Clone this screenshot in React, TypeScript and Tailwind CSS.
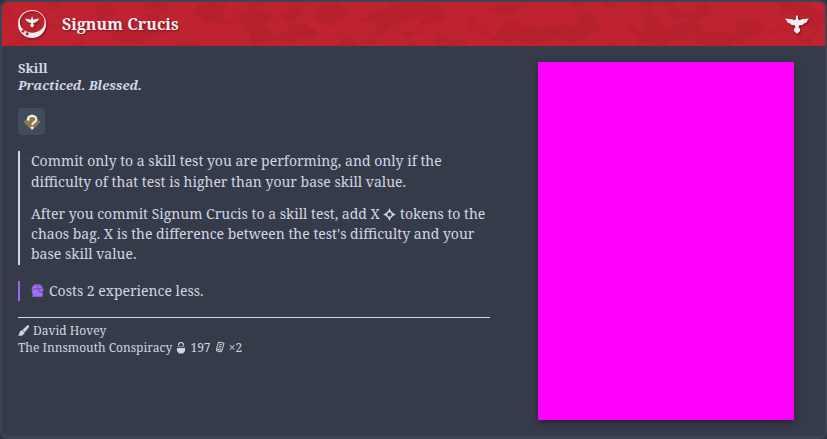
import React from "react";

function Texture() {
  return (
    <svg className="absolute inset-0 h-full w-full" aria-hidden="true">
      <filter id="grain" x="0" y="0" width="100%" height="100%" colorInterpolationFilters="sRGB">
        <feTurbulence type="fractalNoise" baseFrequency="0.03 0.045" numOctaves="4" seed="21" />
        <feColorMatrix values="0 0 0 0 0.68  0 0 0 0 0.13  0 0 0 0 0.17  14 0 0 0 -7.2" />
      </filter>
      <rect width="100%" height="100%" filter="url(#grain)" opacity="0.42" />
    </svg>
  );
}

const DOVE =
  "M12 0 13 1.200 13 3.800 14.200 5.300 17 4.200 24 3.400 22.500 5.500 21.500 7.600 19 8.500 17.500 10 14.500 10.300 13.500 12.300A3 3 0 0 1 13.500 17.600L12 18.800 10.500 17.600A3 3 0 0 1 10.500 12.300L9.500 10.300 6.500 10 5 8.500 2.500 7.600 1.500 5.500 0 3.400 7 4.200 9.800 5.300 11 3.800 10.800 1.600z";

function SealIcon() {
  return (
    <svg className="h-7 w-7 shrink-0 text-[#f0edf2] drop-shadow-[1px_1px_1px_rgba(0,0,0,0.4)]" viewBox="0 0 28 28" fill="currentColor">
      <path fillRule="evenodd" d="M14 0a14 14 0 1 0 0 28A14 14 0 0 0 14 0zM14.200 1.100A12.400 10.800 0 0 1 14.200 22.700 12.400 10.800 0 0 1 14.200 1.100z" />
      <circle cx="5" cy="21.200" r="1.400" fill="#b9222f" />
      <circle cx="9.200" cy="23.800" r="1.600" fill="#b9222f" />
      <path transform="translate(7.300 6.800) scale(.57)" d={DOVE} stroke="currentColor" strokeWidth=".5" />
    </svg>
  );
}

function Line({ children }: { children: React.ReactNode }) {
  return <span className="block whitespace-nowrap">{children}</span>;
}

export default function App() {
  return (
    <div className="h-[439px] w-[827px] bg-[#30333f] font-['Noto_Serif','DejaVu_Serif_Condensed','DejaVu_Serif',serif] text-[#cfd6e6]">
      <article className="flex h-full flex-col overflow-hidden rounded-lg border-2 border-[#3d4453] border-b-[3px] bg-[#363b49]">
        <header className="relative flex h-11 shrink-0 items-center overflow-hidden bg-[#bf2330] pr-4 pl-4">
          <Texture />
          <div className="relative flex w-full items-center">
            <SealIcon />
            <h1 className="ml-4 text-[16px] leading-6 font-bold whitespace-nowrap text-[#f0edf2] [text-shadow:1px_1px_2px_rgba(0,0,0,0.4)]">Signum Crucis</h1>
            <svg className="mt-px ml-auto h-[19px] w-6 text-[#f0edf2] drop-shadow-[1px_1px_1px_rgba(0,0,0,0.4)]" viewBox="0 0 24 19" fill="currentColor">
              <path d={DOVE} />
            </svg>
          </div>
        </header>
        <div className="flex pt-4 pl-4">
          <div className="w-[472px] shrink-0">
            <div className="-mt-0.5 text-[13px] leading-[17px] font-bold">
              <p>Skill</p>
              <p className="italic">Practiced. Blessed.</p>
            </div>
            <div className="mt-[14px] flex h-[27px] w-[27px] items-center justify-center rounded bg-[#434b5e]">
              <svg className="h-[18px] w-[18px]" viewBox="0 0 18 18" fill="none">
                <path d="M9 0.500 17.500 9 9 17.500 0.500 9z" fill="#8e7a50" />
                <path d="M5 6.200C5 4 6.600 3 9 3c2.800 0 4.400 1.300 4.400 3.300 0 3-4 2.600-4.200 5.700" stroke="#f4f4f4" strokeWidth="1.900" />
                <circle cx="5.300" cy="6.600" r="1.300" fill="#f4f4f4" />
                <circle cx="9.200" cy="14.800" r="1.400" fill="#f4f4f4" />
              </svg>
            </div>
            <div className="mt-4 flex h-[114px] flex-col border-l-2 border-[#cfd6e6] pl-[11px] text-[14px]">
              <p className="-mt-px leading-[21px]">
                <Line>Commit only to a skill test you are performing, and only if the</Line>
                <Line>difficulty of that test is higher than your base skill value.</Line>
              </p>
              <p className="mt-3 leading-5">
                <Line>
                  After you commit Signum Crucis to a skill test, add X{" "}
                  <svg className="inline-block h-[13px] w-[13px] align-[-2px]" viewBox="0 0 13 13" fill="currentColor">
                    <path fillRule="evenodd" d="M6.500 0 7.700 2.700 10.300 5.300 13 6.500 10.300 7.700 7.700 10.300 6.500 13 5.300 10.300 2.700 7.700 0 6.500 2.700 5.300 5.300 2.700zM6.500 3.600 3.600 6.500 6.500 9.400 9.400 6.500z" />
                    <path d="M6.500 2v3M6.500 8v3M2 6.500h3M8 6.500h3" stroke="currentColor" strokeWidth=".6" />
                  </svg>{" "}
                  tokens to the
                </Line>
                <Line>chaos bag. X is the difference between the test's difficulty and your</Line>
                <Line>base skill value.</Line>
              </p>
            </div>
            <div className="mt-4 h-5 border-l-2 border-[#9a68f0] pl-[11px] text-[14px] leading-5">
              <Line>
                <svg className="mr-[5px] inline-block h-[13px] w-[13px] align-[-1px] text-[#9f6df5]" viewBox="0 0 13 13" fill="currentColor">
                  <path d="M1 3.500 3 1 6 .2 9 .5l2 2L12.500 6l-.5 1.500-1.500.3 1.500 1.700-.7 3.200H1.500L1.500 9 .6 7z" />
                  <path d="M.8 6 3.500 4.500 7 5M7 .5V5l1.500 3 2.500-.2M7 5l4.500-1" stroke="#363b49" strokeWidth=".5" fill="none" />
                </svg>
                Costs 2 experience less.
              </Line>
            </div>
            <div className="mt-4 border-t border-[#cfd6e6] pt-1 text-[12px] leading-[17px]">
              <Line>
                <svg className="mr-1 inline-block h-[11px] w-[11px] align-[-1px]" viewBox="0 0 11 11" fill="currentColor">
                  <path d="M10.700.3c.6.7.3 1.500-.2 2.200L6.800 7 4.600 5 9 .8c.6-.5 1.200-.9 1.700-.5zM4 5.200l2.500 2.300C6 10 4 11 .2 10.500 1.800 9.500 1 6 4 5.200z" stroke="currentColor" strokeWidth=".3" />
                </svg>
                David Hovey
              </Line>
              <Line>
                The Innsmouth Conspiracy{" "}
                <svg className="inline-block h-[12px] w-[12px] align-[-2px]" viewBox="0 0 12 12" fill="none" stroke="currentColor">
                  <path d="M3.500 3.500V2.800a2.500 2.300 0 0 1 5 0v.7" strokeWidth="1.200" />
                  <path d="M2.500 4.500h7" strokeWidth=".8" opacity=".7" />
                  <path d="M2 6h8v3L8 11.500H4L2 9z" fill="currentColor" stroke="none" />
                </svg>{" "}
                197{" "}
                <svg className="inline-block h-[12px] w-[12px] align-[-1px]" viewBox="0 0 12 12" fill="none" stroke="currentColor" strokeWidth="1">
                  <path d="M4.500 1 10 2.200 8 9.400 2.500 8.200zM5.500 3.300l2.500.6M4.900 5.100l2.500.6M4.500 6.800l2.300.5M2.500 8.500v1.400l4.700 1 .8-1.400" />
                </svg>{" "}
                ×2
              </Line>
            </div>
          </div>
          <div className="ml-12 h-[358px] w-64 bg-[#ff00ff] shadow-[0_3px_7px_rgba(0,0,0,0.35)]" />
        </div>
      </article>
    </div>
  );
}
